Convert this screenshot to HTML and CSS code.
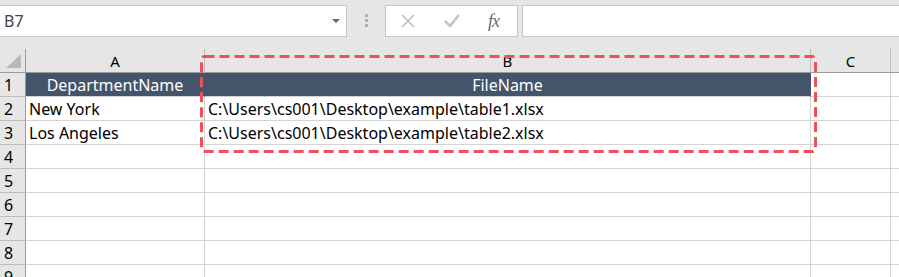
FILE: index.html
```html
<!DOCTYPE html>
<html>
  <head>
    <title>Sheet</title>
    <meta charset="UTF-8" />
    <link rel="stylesheet" href="styles.css">
  </head>
  <body>
    <div class="toolbar">
      <div class="name-box">
        <span>B7</span>
        <span class="caret"></span>
      </div>
      <div class="grip"><span></span><span></span><span></span></div>
      <div class="fx-box">
        <svg class="icon" width="16" height="16" viewBox="0 0 16 16">
          <path d="M2 2 L14 14 M14 2 L2 14" stroke="#bdbdbd" stroke-width="1.6" fill="none" />
        </svg>
        <svg class="icon" width="18" height="16" viewBox="0 0 18 16">
          <path d="M2 8 L7 13 L16 2" stroke="#c4c4c4" stroke-width="2.6" fill="none" />
        </svg>
        <span class="fx">fx</span>
      </div>
      <div class="formula"></div>
    </div>

    <div class="sheet">
      <div class="corner"><span class="tri"></span></div>
      <div class="col-head">A</div>
      <div class="col-head">B</div>
      <div class="col-head">C</div>
      <div class="col-head last"></div>

      <div class="row-head">1</div>
      <div class="cell title">DepartmentName</div>
      <div class="cell title">FileName</div>
      <div class="cell"></div>
      <div class="cell last"></div>

      <div class="row-head">2</div>
      <div class="cell">New York</div>
      <div class="cell">C:\Users\cs001\Desktop\example\table1.xlsx</div>
      <div class="cell"></div>
      <div class="cell last"></div>

      <div class="row-head">3</div>
      <div class="cell">Los Angeles</div>
      <div class="cell">C:\Users\cs001\Desktop\example\table2.xlsx</div>
      <div class="cell"></div>
      <div class="cell last"></div>

      <div class="row-head">4</div>
      <div class="cell"></div><div class="cell"></div><div class="cell"></div><div class="cell last"></div>
      <div class="row-head">5</div>
      <div class="cell"></div><div class="cell"></div><div class="cell"></div><div class="cell last"></div>
      <div class="row-head">6</div>
      <div class="cell"></div><div class="cell"></div><div class="cell"></div><div class="cell last"></div>
      <div class="row-head">7</div>
      <div class="cell"></div><div class="cell"></div><div class="cell"></div><div class="cell last"></div>
      <div class="row-head">8</div>
      <div class="cell"></div><div class="cell"></div><div class="cell"></div><div class="cell last"></div>
      <div class="row-head">9</div>
      <div class="cell"></div><div class="cell"></div><div class="cell"></div><div class="cell last"></div>

      <!-- highlight around column B -->
      <svg class="highlight" width="624" height="104" viewBox="0 0 624 104">
        <rect x="2.5" y="2.5" width="614" height="95" rx="3" fill="none"
              stroke="#f0505c" stroke-width="3" stroke-dasharray="10 5" />
      </svg>
    </div>
  </body>
</html>
```

FILE: styles.css
```css
body {
  margin: 0;
  padding: 0;
  background-color: #ffffff;
  font-family: "Noto Sans", "Open Sans", sans-serif;
  overflow: hidden;
}

/* formula bar */
.toolbar {
  display: flex;
  align-items: flex-start;
  height: 49px;
  padding-top: 5px;
  box-sizing: border-box;
  background-color: #e6e6e6;
}
.name-box {
  display: flex;
  align-items: center;
  justify-content: space-between;
  width: 347px;
  height: 32px;
  box-sizing: border-box;
  padding: 0 6px 0 4px;
  background-color: #ffffff;
  border: 1px solid #c6c6c6;
  border-left: none;
  font-size: 16px;
  color: #444444;
}
.caret {
  width: 0;
  height: 0;
  border-left: 4px solid transparent;
  border-right: 4px solid transparent;
  border-top: 4px solid #666666;
}
.grip {
  display: flex;
  flex-direction: column;
  gap: 2px;
  margin: 9px 17px 0 18px;
}
.grip span {
  display: block;
  width: 3px;
  height: 3px;
  background-color: #b0b0b0;
}
.fx-box {
  display: flex;
  align-items: center;
  width: 133px;
  height: 32px;
  box-sizing: border-box;
  padding-left: 14px;
  gap: 27px;
  background-color: #ffffff;
  border: 1px solid #c6c6c6;
}
.fx {
  font-family: "Liberation Serif", serif;
  font-style: italic;
  font-size: 18px;
  color: #6b6b6b;
  letter-spacing: -1px;
}
.formula {
  flex: 1;
  height: 32px;
  margin-left: 4px;
  box-sizing: border-box;
  background-color: #ffffff;
  border: 1px solid #c6c6c6;
  border-right: none;
}

/* sheet grid */
.sheet {
  position: relative;
  display: grid;
  grid-template-columns: 26px 179px 606px 80px 1fr;
  grid-auto-rows: 24px;
  font-size: 16px;
  color: #000000;
}
.corner,
.col-head,
.row-head,
.cell {
  box-sizing: border-box;
}
.corner {
  position: relative;
  background-color: #e6e6e6;
  border-right: 1px solid #9b9b9b;
  border-bottom: 1px solid #9b9b9b;
}
.tri {
  position: absolute;
  left: 6px;
  bottom: 4px;
  width: 0;
  height: 0;
  border-left: 15px solid transparent;
  border-bottom: 14px solid #b9b9b9;
}
.col-head {
  display: flex;
  align-items: center;
  justify-content: center;
  font-size: 15px;
  background-color: #e6e6e6;
  border-right: 1px solid #bdbdbd;
  border-bottom: 1px solid #9b9b9b;
}
.row-head {
  display: flex;
  align-items: center;
  padding-left: 4px;
  background-color: #e6e6e6;
  border-right: 1px solid #9b9b9b;
  border-bottom: 1px solid #bdbdbd;
}
.cell {
  display: flex;
  align-items: center;
  padding-left: 3px;
  white-space: nowrap;
  border-right: 1px solid #d4d4d4;
  border-bottom: 1px solid #d4d4d4;
}
.cell.title {
  justify-content: center;
  padding-left: 0;
  background-color: #44546a;
  color: #ffffff;
  border-right-color: #44546a;
}
.last {
  border-right: none;
}
.highlight {
  position: absolute;
  left: 199px;
  top: 5px;
}
```
